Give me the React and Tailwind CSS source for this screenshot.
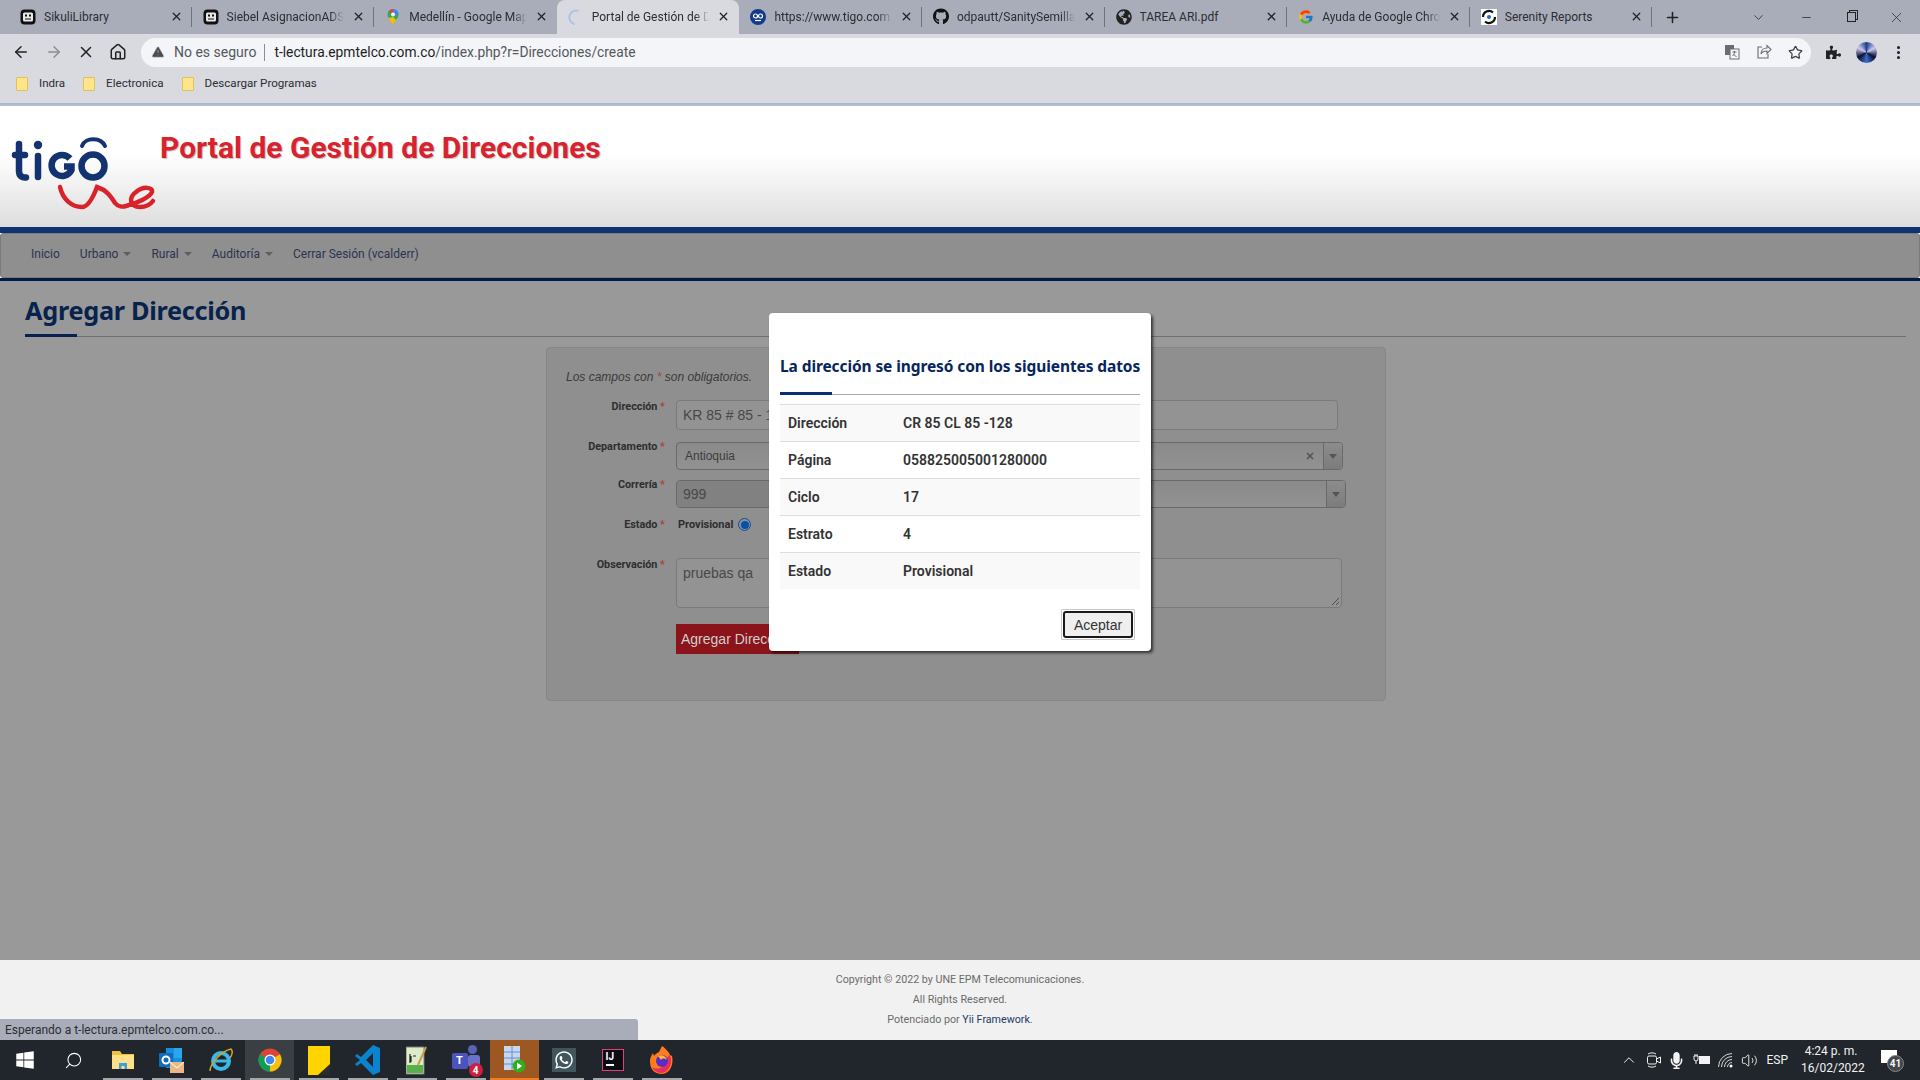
import React from 'react';
import {
  ArrowLeft, ArrowRight, X, Home, TriangleAlert, Star, Plus, ChevronDown, Minus,
  EllipsisVertical, Search, ChevronUp, Volume2,
} from 'lucide-react';
import { FaGithub, FaWindows, FaWhatsapp, FaPuzzlePiece, FaGlobeAmericas, FaMicrophone } from 'react-icons/fa';
import { FcGoogle } from 'react-icons/fc';

// favicons de las pestañas
function RobotIcon() {
  return (
    <svg width="16" height="16" viewBox="0 0 16 16">
      <rect x="0.500" y="0.500" width="15" height="15" rx="4" fill="#111" />
      <rect x="3" y="3.500" width="10" height="9" rx="1.500" fill="#e8e8e8" />
      <rect x="5" y="5.500" width="2" height="2" fill="#111" />
      <rect x="9" y="5.500" width="2" height="2" fill="#111" />
      <rect x="5" y="9.500" width="6" height="1" fill="#111" />
    </svg>
  );
}

function MapsIcon() {
  return (
    <svg width="16" height="16" viewBox="0 0 16 16">
      <path d="M8 0a5.500 5.500 0 0 1 5.500 5.500C13.500 9 10 11 8 16 6 11 2.500 9 2.500 5.500A5.500 5.500 0 0 1 8 0z" fill="#34a853" />
      <path d="M8 0a5.500 5.500 0 0 1 5.500 5.500L8 7z" fill="#4285f4" />
      <path d="M8 0a5.500 5.500 0 0 0-4.200 2L8 6z" fill="#ea4335" />
      <path d="M8 8L3.500 9 8 16c.5-1.500 2-3.500 3.200-5z" fill="#fbbc04" />
      <circle cx="8" cy="5.500" r="1.900" fill="#fff" />
    </svg>
  );
}

function SpinnerIcon() {
  return (
    <svg width="16" height="16" viewBox="0 0 16 16" fill="none">
      <path d="M10 1.600A7 7 0 0 0 6 15" stroke="#a9c4ea" strokeWidth="2" strokeLinecap="round" />
    </svg>
  );
}

function TigoIcon() {
  return (
    <svg width="16" height="16" viewBox="0 0 16 16">
      <circle cx="8" cy="8" r="8" fill="#123a8c" />
      <circle cx="5.500" cy="7" r="2" fill="none" stroke="#fff" strokeWidth="1.200" />
      <circle cx="10.500" cy="7" r="2" fill="none" stroke="#fff" strokeWidth="1.200" />
      <path d="M5 11.500h6" stroke="#fff" strokeWidth="1.200" />
    </svg>
  );
}

function SerenityIcon() {
  return (
    <svg width="16" height="16" viewBox="0 0 16 16" fill="none">
      <rect width="16" height="16" fill="#fff" />
      <path d="M2 8a6 6 0 0 1 10-4.500" stroke="#111" strokeWidth="2.200" />
      <path d="M14 8a6 6 0 0 1-10 4.500" stroke="#111" strokeWidth="2.200" />
      <circle cx="8" cy="8" r="2" fill="#1f6fb8" />
    </svg>
  );
}

const TABS = [
  { title: 'SikuliLibrary', icon: <RobotIcon /> },
  { title: 'Siebel AsignacionADSL', icon: <RobotIcon />, fade: true },
  { title: 'Medellín - Google Maps', icon: <MapsIcon />, fade: true },
  { title: 'Portal de Gestión de Direcciones', icon: <SpinnerIcon />, fade: true, active: true },
  { title: 'https://www.tigo.com.co', icon: <TigoIcon />, fade: true },
  { title: 'odpautt/SanitySemillas', icon: <FaGithub size={17} className="text-[#111]" />, fade: true },
  { title: 'TAREA ARI.pdf', icon: <FaGlobeAmericas size={16} className="text-[#222]" /> },
  { title: 'Ayuda de Google Chrome', icon: <FcGoogle size={16} />, fade: true },
  { title: 'Serenity Reports', icon: <SerenityIcon /> },
];

const BOOKMARKS = ['Indra', 'Electronica', 'Descargar Programas'];

const ROWS = [
  ['Dirección', 'CR 85 CL 85 -128'],
  ['Página', '058825005001280000'],
  ['Ciclo', '17'],
  ['Estrato', '4'],
  ['Estado', 'Provisional'],
];

function Tab({ tab }) {
  return (
    <div
      className={`flex h-[34px] w-[182.600px] shrink-0 items-center gap-2 pb-px pl-[11px] pr-[9px] ${
        tab.active ? 'rounded-t-lg bg-[#d8dadf]' : ''
      }`}
    >
      <span className="flex w-4 shrink-0 justify-center">{tab.icon}</span>
      <span
        className={`min-w-0 flex-1 overflow-hidden whitespace-nowrap text-[12px] text-[#2b2d33] ${
          tab.fade ? '[mask-image:linear-gradient(to_right,black_88%,transparent)]' : ''
        }`}
      >
        {tab.title}
      </span>
      <X size={13} strokeWidth={2.4} className="shrink-0 text-[#222]" />
    </div>
  );
}

function Browser() {
  return (
    <div className="shrink-0">
      {/* pestañas */}
      <div className="flex h-[34px] items-center bg-[#a9adb9]">
        <div className="flex pl-[9px]">
          {TABS.map((tab, i) => (
            <div key={tab.title} className="flex items-center">
              <Tab tab={tab} />
              {i !== 2 && i !== 3 && <div className="-ml-px h-[20px] w-px bg-[#6f727c]" />}
            </div>
          ))}
        </div>
        <Plus size={17} strokeWidth={2.2} className="ml-[12px] text-[#222]" />
        <ChevronDown size={15} strokeWidth={1.2} className="ml-[70px] text-[#222]" />
        <Minus size={13} strokeWidth={1.4} className="ml-[34px] text-[#222]" />
        <div className="ml-[34px] h-[10px] w-[9px] border border-[#222] shadow-[2px_-2px_0_-1px_#a9adb9,2px_-2px_0_0_#222]" />
        <X size={17} strokeWidth={1} className="ml-[32px] text-[#222]" />
      </div>

      {/* barra de dirección */}
      <div className="flex h-[36px] items-center bg-[#d8dadf]">
        <ArrowLeft size={18} strokeWidth={2} className="ml-[12px] text-[#222]" />
        <ArrowRight size={18} strokeWidth={2} className="ml-[15px] text-[#8b8d93]" />
        <X size={18} strokeWidth={2} className="ml-[14px] text-[#222]" />
        <Home size={18} strokeWidth={2} className="ml-[14px] text-[#222]" />
        <div className="ml-[14px] flex h-[29px] w-[1670px] items-center rounded-full bg-[#f3f5f8] pl-[10px] pr-[8px]">
          <TriangleAlert size={14} fill="#4a4c52" strokeWidth={1} className="text-[#d8dadf]" />
          <span className="ml-[9px] text-[14px] text-[#55575d]">No es seguro</span>
          <span className="ml-[8px] h-[17px] w-px bg-[#8b8d93]" />
          <span className="ml-[9px] text-[13.800px] text-[#55575d]">
            <span className="text-[#1c1d20]">t-lectura.epmtelco.com.co</span>/index.php?r=Direcciones/create
          </span>
          {/* traducir */}
          <svg width="16" height="16" viewBox="0 0 16 16" className="ml-auto">
            <rect x="1" y="1" width="9" height="10" fill="#6a6c72" />
            <rect x="6" y="5" width="9" height="10" fill="#f3f5f8" stroke="#6a6c72" />
            <path d="M8.500 8h4M10.500 7v1c0 2-1 3-2 4M9.500 10c.5 1 1.500 2 3 2.500" stroke="#6a6c72" fill="none" />
          </svg>
          {/* compartir */}
          <svg width="16" height="16" viewBox="0 0 16 16" fill="none" stroke="#6a6c72" strokeWidth="1.100" className="ml-[16px]">
            <path d="M6 3H2v11h10v-4" />
            <path d="M5 10c0-4 3-6 6-6V1.500L15 5.500l-4 4V7c-3 0-5 1-6 3z" />
          </svg>
          <Star size={15} className="ml-[16px] text-[#3d3f45]" />
        </div>
        <FaPuzzlePiece size={15} className="ml-[15px] text-[#222]" />
        <div className="ml-[15px] h-[21px] w-[21px] rounded-full bg-[conic-gradient(#1f3f8f,#c8c8f0,#0b1230,#3a6ad0,#0b1230,#d0c8f0,#1f3f8f)]" />
        <EllipsisVertical size={17} strokeWidth={2.4} className="ml-[13px] text-[#222]" />
      </div>

      {/* marcadores */}
      <div className="flex h-[33px] items-center gap-[18px] bg-[#d8dadf] pb-[5px] pl-[16px]">
        {BOOKMARKS.map((name) => (
          <div key={name} className="flex items-center gap-[11px]">
            <div className="h-[14px] w-[12px] rounded-[1px] border border-[#e0c25c] bg-[#ffe58a]" />
            <span className="text-[11.600px] text-[#2b2d33]">{name}</span>
          </div>
        ))}
      </div>
      <div className="h-px bg-[#b4b5b9]" />
      <div className="h-[2px] bg-[#a9c0da]" />
    </div>
  );
}

function TigoLogo() {
  return (
    <svg width="150" height="80" viewBox="10 133 150 80" fill="none" className="shrink-0">
      <g stroke="#12336f" strokeWidth="6.500" strokeLinecap="round">
        <path d="M19 144v27c0 5 3 7 7 6.500" />
        <path d="M15 155h10" />
        <path d="M38 156v21" />
        <path d="M70 158.500A10.500 10.500 0 1 0 71.500 170v-3.500H64" strokeLinecap="butt" />
        <circle cx="93" cy="166" r="11.500" />
      </g>
      <circle cx="38" cy="145" r="4.200" fill="#12336f" />
      <path d="M82 146c3-9 19-9 23 0" stroke="#12336f" strokeWidth="4" strokeLinecap="round" />
      <path
        d="M60 187C63 200 72 207 82 207C89 207 94 195 97 187C106 190 110 195 115 203C118 207 123 207 126 206C138 203 150 197 152 192C153 187 143 186 136 192C128 198 130 207 140 207C145 207 150 205 153 201"
        stroke="#d8232a"
        strokeWidth="4.500"
        strokeLinecap="round"
      />
    </svg>
  );
}

function Field({ label, className, labelClass = '', children }) {
  return (
    <div className={`flex ${className}`}>
      <div className={`w-[118px] shrink-0 text-right text-[10.800px] font-bold leading-[13px] text-[#2e2e2e] ${labelClass}`}>
        {label} <span className="text-[#a8433f]">*</span>
      </div>
      <div className="ml-[11px] flex-1">{children}</div>
    </div>
  );
}

function SelectBox({ width, disabled, value, clear, sep }) {
  return (
    <div
      className={`flex h-[28px] items-center overflow-hidden rounded-[4px] border border-[#696969] bg-gradient-to-b from-[#8a8a8a] to-[#929292] ${width}`}
    >
      <span
        className={`flex h-full w-[300px] items-center ${
          disabled ? 'bg-[#818181] pl-[6px] text-[14px] text-[#484848]' : 'pl-[8px] text-[12px] text-[#3c3c3c]'
        } font-['Liberation_Sans',Arial,sans-serif]`}
      >
        {value}
      </span>
      {clear && <X size={10} strokeWidth={4} className="ml-auto mr-[8px] text-[#555]" />}
      <div className={`flex h-full w-[19px] items-center justify-center border-l border-[#696969] bg-gradient-to-b from-[#8c8c8c] to-[#7c7c7c] ${sep}`}>
        <div className="h-0 w-0 border-x-[4px] border-t-[5px] border-x-transparent border-t-[#555]" />
      </div>
    </div>
  );
}

function Page() {
  return (
    <div className="flex flex-1 flex-col">
      {/* cabecera */}
      <header className="flex h-[121px] items-start bg-gradient-to-b from-white from-40% to-[#dedede] pl-[10px] pt-[27px]">
        <TigoLogo />
        <h1 className="-mt-[5px] text-[30px] font-bold leading-[40px] text-[#d8232f] [text-shadow:1px_1px_1px_rgba(0,0,0,.25)]">
          Portal de Gestión de Direcciones
        </h1>
      </header>
      <div className="h-[6px] bg-[#0f3272]" />

      {/* menú */}
      <nav className="flex h-[45px] items-center gap-5 rounded-[3px] border border-[#7b7b7b] bg-[#8f8f8f] pb-[4px] pl-[30px] text-[12px] text-[#2b3350]">
        <span>Inicio</span>
        {['Urbano', 'Rural', 'Auditoría'].map((item) => (
          <span key={item} className="flex items-center gap-[5px]">
            {item}
            <span className="h-0 w-0 border-x-[4px] border-t-[4px] border-x-transparent border-t-[#5e5e5e]" />
          </span>
        ))}
        <span>Cerrar Sesión (vcalderr)</span>
      </nav>
      <div className="h-[3px] bg-[#001c47]" />

      {/* contenido */}
      <main className="flex flex-1 flex-col bg-[#999999] pl-[25px] pr-[14px]">
        <div className="relative h-[56px] border-b border-[#6f6f6f]">
          <h2 className="pt-[11px] font-['Noto_Sans',sans-serif] text-[25.300px] font-bold leading-[36px] tracking-[-0.300px] text-[#07224d]">
            Agregar Dirección
          </h2>
          <div className="absolute -bottom-px left-0 h-[3px] w-[52px] bg-[#07224d]" />
        </div>

        <section className="ml-[521px] mt-[10px] h-[354px] w-[840px] rounded-[4px] border border-[#868686] bg-[#8f8f8f]">
          <p className="pl-[19px] pt-[22px] font-['Liberation_Sans',Arial,sans-serif] text-[12px] italic leading-[14px] text-[#3a3a3a]">
            Los campos con <span className="text-[#a8433f]">*</span> son obligatorios.
          </p>

          <Field label="Dirección" className="mt-[16px]">
            <div className="h-[30px] w-[662px] rounded-[4px] border border-[#7a7a7a] bg-[#939393] pl-[6px] font-['Liberation_Sans',Arial,sans-serif] text-[14px] leading-[28px] text-[#484848]">
              KR 85 # 85 - 128
            </div>
          </Field>
          <Field label="Departamento" className="mt-[12px]" labelClass="-mt-[2px]">
            <SelectBox width="w-[667px]" value="Antioquia" clear />
          </Field>
          <Field label="Correría" className="mt-[10px]" labelClass="-mt-[2px]">
            <SelectBox width="w-[670px]" value="999" disabled sep="ml-auto" />
          </Field>
          <Field label="Estado" className="mt-[9px]" labelClass="mt-[1px]">
            <div className="flex items-center">
              <span className="ml-[2px] text-[11px] font-bold leading-[15px] text-[#2e2e2e]">Provisional</span>
              <span className="ml-[5px] flex h-[13px] w-[13px] items-center justify-center rounded-full border-[1.500px] border-[#0a50a8]">
                <span className="h-[8px] w-[8px] rounded-full bg-[#0a50a8]" />
              </span>
            </div>
          </Field>
          <Field label="Observación" className="mt-[26px]">
            <div className="relative h-[50px] w-[666px] rounded-[4px] border border-[#7a7a7a] bg-[#939393] pl-[6px] pt-[1px] font-['Liberation_Sans',Arial,sans-serif] text-[14px] leading-[27px] text-[#484848]">
              pruebas qa
              <svg width="9" height="9" viewBox="0 0 9 9" className="absolute bottom-[1px] right-[1px]">
                <path d="M1 8l7-7M5 8l3-3" stroke="#3a3a3a" strokeWidth="0.800" />
              </svg>
            </div>
          </Field>
          <div className="ml-[129px] mt-[16px] h-[30px] w-[123px] bg-[#8a1419] pl-[5px] font-['Liberation_Sans',Arial,sans-serif] text-[14px] leading-[30px] text-[#cfcfcf]">
            Agregar Dirección
          </div>
        </section>
      </main>

      {/* pie */}
      <footer className="h-[80px] bg-[#f1f1f1] pt-[10px] text-center text-[10.700px] leading-[20px] text-[#6b6b6b]">
        <div>Copyright © 2022 by UNE EPM Telecomunicaciones.</div>
        <div>All Rights Reserved.</div>
        <div>
          Potenciado por <span className="text-[#223a66]">Yii Framework</span>.
        </div>
      </footer>
    </div>
  );
}

function Modal() {
  return (
    <div className="absolute left-[769px] top-[313px] h-[338px] w-[382px] rounded-[4px] bg-white px-[11px] shadow-[2px_2px_3px_rgba(0,0,0,.65)]">
      <div className="relative h-[82px] border-b border-[#a8a8a8] pt-[39px]">
        <h3 className="whitespace-nowrap font-['Noto_Sans',sans-serif] text-[15.500px] font-bold leading-[28px] tracking-[-0.100px] text-[#07265c]">
          La dirección se ingresó con los siguientes datos
        </h3>
        <div className="absolute -bottom-px left-0 h-[3px] w-[52px] bg-[#0a2f70]" />
      </div>
      <div className="mt-[9px]">
        {ROWS.map(([label, value], i) => (
          <div
            key={label}
            className={`flex h-[37px] items-center border-t border-[#ddd] text-[14px] font-semibold text-[#333] ${
              i % 2 === 0 ? 'bg-[#f9f9f9]' : 'bg-white'
            }`}
          >
            <span className="w-[123px] pl-2">{label}</span>
            <span>{value}</span>
          </div>
        ))}
      </div>
      <div className="mt-[20px] flex justify-end pr-[5px]">
        <div className="rounded-[1px] border border-[#c8c8c8] p-px">
          <button
            type="button"
            className="h-[27px] w-[70px] rounded-[3px] border-2 border-[#1a1a1a] bg-[#efefef] pt-px font-['Liberation_Sans',Arial,sans-serif] text-[14px] text-[#333]"
          >
            Aceptar
          </button>
        </div>
      </div>
    </div>
  );
}

// iconos de la barra de tareas
const TASK_ICONS = [
  <FaWindows size={20} className="text-white" />,
  <Search size={19} strokeWidth={1.300} className="-scale-x-100 text-white" />,
  <svg width="24" height="24" viewBox="0 0 24 24">
    <path d="M1 3h8l2 3h12v15H1z" fill="#f0c040" />
    <path d="M1 7h22v14H1z" fill="#ffe08a" />
    <path d="M8 15h8v6h-2.500v-3h-3v3H8z" fill="#3f9fdc" />
  </svg>,
  <svg width="27" height="27" viewBox="0 0 27 27">
    <rect x="8" y="1" width="16" height="20" fill="#1490df" />
    <rect x="16" y="1" width="8" height="10" fill="#28a8ea" />
    <rect x="1" y="6" width="14" height="14" rx="1" fill="#0f6cbd" />
    <circle cx="8" cy="13" r="3.500" fill="none" stroke="#fff" strokeWidth="2" />
    <rect x="12" y="15" width="14" height="11" fill="#e9b884" />
    <path d="M12 15l7 6 7-6" fill="none" stroke="#fff" strokeWidth="1" />
  </svg>,
  <svg width="26" height="26" viewBox="0 0 26 26" fill="none">
    <circle cx="13" cy="14" r="8" stroke="#3cb8e8" strokeWidth="4" />
    <path d="M6 14h15" stroke="#3cb8e8" strokeWidth="3" />
    <path d="M2 24C2 16 14 4 23 2c2 2 1 6-1 9" stroke="#d8a520" strokeWidth="1.500" />
  </svg>,
  <svg width="24" height="24" viewBox="0 0 24 24">
    <circle cx="12" cy="12" r="11.500" fill="#db4437" />
    <path d="M12 12L21.960 6.250A11.500 11.500 0 0 1 12 23.500z" fill="#f4c20d" />
    <path d="M12 12L12 23.500A11.500 11.500 0 0 1 2.040 6.250z" fill="#0f9d58" />
    <circle cx="12" cy="12" r="5.500" fill="#fff" />
    <circle cx="12" cy="12" r="4.300" fill="#4285f4" />
  </svg>,
  <svg width="22" height="29" viewBox="0 0 22 29">
    <path d="M0 0h22v20l-9 9H0z" fill="#ffd400" />
    <path d="M22 18v11H10z" fill="#2b2b2b" />
  </svg>,
  <svg width="25" height="32" viewBox="0 0 25 32">
    <path d="M18 1l7 3v24l-7 3L6 19l-4 3-2-2 5-4-5-4 2-2 4 3zM18 9l-7 7 7 7z" fill="#0a84cf" />
  </svg>,
  <svg width="21" height="30" viewBox="0 0 21 30">
    <rect x="0" y="2" width="18" height="27" fill="#ddecc8" stroke="#777" />
    <rect x="1" y="20" width="16" height="8" fill="#58b04a" />
    <path d="M4 9v9M7 11h3M5 11v6" stroke="#222" strokeWidth="1.200" />
    <path d="M12 20L20 2" stroke="#c9a04a" strokeWidth="2" />
  </svg>,
  <div className="relative h-[30px] w-[28px]">
    <div className="absolute right-[3px] top-0 h-[9px] w-[9px] rounded-full bg-[#5b63b8]" />
    <div className="absolute right-0 top-[10px] h-[12px] w-[12px] rounded-[3px] bg-[#6a72c8]" />
    <div className="absolute left-0 top-[8px] flex h-[16px] w-[16px] items-center justify-center rounded-[2px] bg-[#4b53bc] text-[11px] font-bold text-white">
      T
    </div>
    <div className="absolute -bottom-[2px] -right-[3px] flex h-[14px] w-[14px] items-center justify-center rounded-full bg-[#d01f3c] text-[10px] font-bold text-white">
      4
    </div>
  </div>,
  <svg width="22" height="28" viewBox="0 0 22 28">
    <rect x="0" y="0" width="16" height="24" fill="#c7d7ee" />
    <path d="M0 6h16M0 12h16M0 18h16M8 0v24" stroke="#6a8fc8" />
    <circle cx="15" cy="20" r="6.500" fill="#2fae1e" />
    <path d="M13 16.500l5 3.500-5 3.500z" fill="#fff" />
  </svg>,
  <div className="flex h-[24px] w-[24px] items-center justify-center bg-[#40565c]">
    <FaWhatsapp size={20} className="text-white" />
  </div>,
  <div className="h-[22px] w-[22px] border border-[#e0407a] bg-[#0b0b12] pl-[3px] pt-[1px] text-[10px] font-bold leading-[11px] text-white">
    IJ
    <div className="mt-[2px] h-[1.500px] w-[8px] bg-white" />
  </div>,
  <svg width="24" height="28" viewBox="0 0 24 28">
    <path d="M12 0c3 2 7 6 8 9l2 1c2 8-2 18-10 18S0 23 0 15c0-4 2-6 3-8l1 3c1-2 3-3 5-4 1-2 2-4 3-6z" fill="#ff7b1c" />
    <path d="M20 9c3 8-1 17-8 18-4 0-8-2-10-6 4 3 13 2 14-6 0-2 2-5 4-6z" fill="#e62d5c" />
    <circle cx="12" cy="15" r="6" fill="#5b2bc4" />
    <path d="M8 10c4-2 8 0 9 4-2-2-5-2-6 0z" fill="#ffb52e" />
  </svg>,
];

function Taskbar() {
  return (
    <div className="flex h-[40px] shrink-0 items-stretch bg-[#20262b] text-white">
      {TASK_ICONS.map((icon, i) => (
        <div
          key={i}
          className={`relative flex w-[49px] shrink-0 items-center justify-center ${
            i === 5 ? 'bg-[#3a3f43]' : i === 10 ? 'bg-[#9c5722]' : ''
          }`}
        >
          {icon}
          {i >= 2 && (
            <div
              className={`absolute bottom-0 h-[2px] ${
                i === 10 ? 'left-0 right-0 bg-[#f47a1f]' : 'left-[5px] right-[4px] bg-[#a5a8ab]'
              }`}
            />
          )}
        </div>
      ))}

      {/* bandeja */}
      <div className="ml-auto flex items-center text-[#f2f2f2]">
        <ChevronUp size={18} strokeWidth={1.300} />
        {/* reunión */}
        <svg width="16" height="18" viewBox="0 0 16 18" fill="none" stroke="#f2f2f2" className="ml-[8px]">
          <rect x="1.500" y="5" width="9" height="8" rx="1.500" />
          <path d="M10.500 8l4-2v6l-4-2M2 3c2-1.500 6-1.500 8 0M2 15c2 1.500 6 1.500 8 0" />
        </svg>
        <FaMicrophone size={17} className="ml-[6px]" />
        {/* batería con enchufe */}
        <svg width="18" height="14" viewBox="0 0 18 14" fill="none" stroke="#f2f2f2" className="ml-[8px]">
          <path d="M1 3v3a2 2 0 0 0 4 0V3zM2 1v2M4 1v2M3 8v3" />
          <rect x="6.500" y="3.500" width="10" height="7" fill="#f2f2f2" />
        </svg>
        {/* red */}
        <svg width="17" height="17" viewBox="0 0 17 17" fill="none" stroke="#d8d8d8" className="ml-[6px]">
          <path d="M1.500 15A13.500 13.500 0 0 1 15 1.500M4.500 15A10.500 10.500 0 0 1 15 4.500M7.500 15A7.500 7.500 0 0 1 15 7.500M10.500 15A4.500 4.500 0 0 1 15 10.500" />
          <circle cx="14" cy="14" r="1.500" fill="#fff" stroke="none" />
        </svg>
        <Volume2 size={17} strokeWidth={1.300} className="ml-[7px]" />
        <span className="ml-[8px] text-[12px]">ESP</span>
        <div className="ml-[13px] w-[60px] text-center text-[12px] leading-[17px]">
          <div>4:24 p. m.</div>
          <div>16/02/2022</div>
        </div>
        <div className="relative ml-[20px] mr-[19px] h-[24px] w-[20px]">
          <div className="absolute left-0 top-[2px] h-[13px] w-[16px] bg-white" />
          <div className="absolute -right-[3px] bottom-0 flex h-[17px] w-[17px] items-center justify-center rounded-full border border-[#888] bg-[#43474b] text-[10px] font-bold">
            41
          </div>
        </div>
      </div>
    </div>
  );
}

export default function App() {
  return (
    <div className="relative flex h-[1080px] w-[1920px] flex-col overflow-hidden font-['Roboto',sans-serif]">
      <Browser />
      <Page />
      <Taskbar />
      <Modal />
      {/* burbuja de estado */}
      <div className="absolute bottom-[40px] left-0 flex h-[21px] w-[638px] items-center rounded-tr-[3px] bg-[#a9adb9] pl-[5px] text-[12px] text-[#2b2d33]">
        Esperando a t-lectura.epmtelco.com.co...
      </div>
    </div>
  );
}
